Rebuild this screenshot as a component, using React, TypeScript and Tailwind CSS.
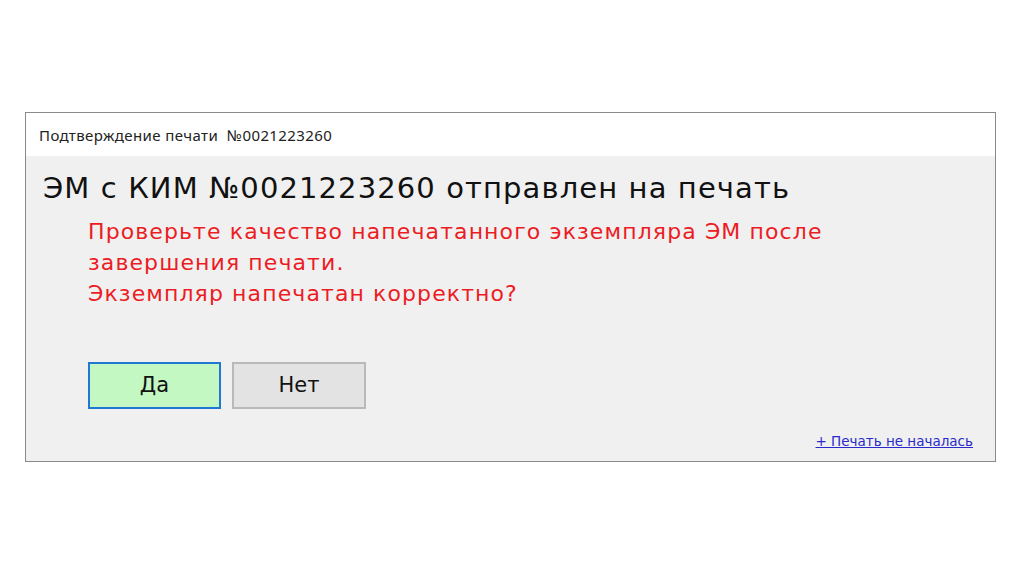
export default function App() {
  return (
    <div className="w-[1024px] h-[574px] bg-white pt-[112px] pl-[25px]">
      <div className="w-[971px] h-[350px] border border-[#8a8a8a] flex flex-col bg-[#f0f0f0]">
        <div className="h-[43px] bg-white flex items-center pl-[13px] pt-[2px] text-[15px] tracking-[0.4px] text-[#222] font-['Noto_Sans',sans-serif]">
          Подтверждение печати&nbsp;&nbsp;№0021223260
        </div>
        <div className="flex-1 flex flex-col pl-[17px] pr-[22px]">
          <div className="mt-[14px] text-[29px] leading-[36px] tracking-[1.1px] text-[#111] font-['DejaVu_Sans',sans-serif]">
            ЭМ с КИМ №0021223260 отправлен на печать
          </div>
          <div className="mt-[10px] pl-[45px] text-[22px] leading-[31px] tracking-[1.1px] text-[#ec1c24] font-['DejaVu_Sans',sans-serif]">
            <div>Проверьте качество напечатанного экземпляра ЭМ после</div>
            <div>завершения печати.</div>
            <div>Экземпляр напечатан корректно?</div>
          </div>
          <div className="mt-[53px] pl-[45px] flex gap-[11px] font-['DejaVu_Sans',sans-serif] text-[21px] text-[#111]">
            <button className="w-[133px] h-[47px] bg-[#c3f8c3] border-2 border-[#1f78d4]">Да</button>
            <button className="w-[134px] h-[47px] bg-[#e3e3e3] border-2 border-[#b9b9b9]">Нет</button>
          </div>
          <div className="mt-auto mb-[10px] self-end text-[13.5px] text-[#2a2acb] underline font-['DejaVu_Sans',sans-serif]">
            + Печать не началась
          </div>
        </div>
      </div>
    </div>
  );
}
